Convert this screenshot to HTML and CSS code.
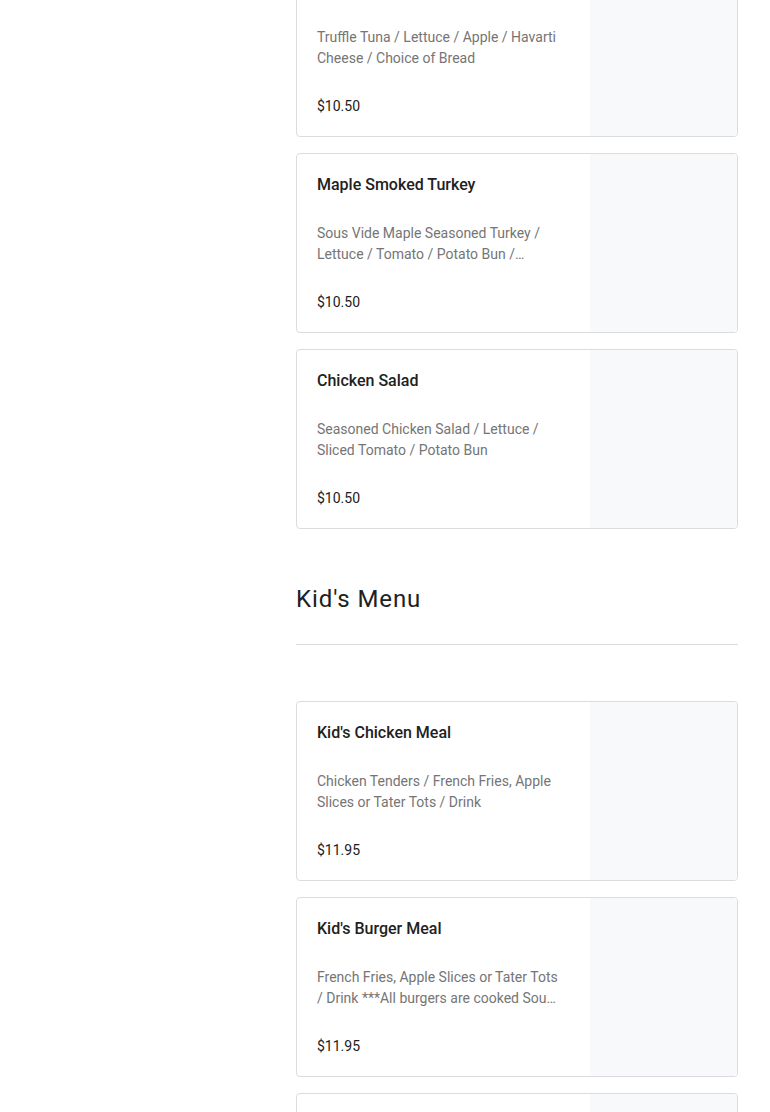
FILE: index.html
```html
<!DOCTYPE html>
<html lang="en">
<head>
<meta charset="utf-8">
<title>Menu</title>
<link rel="stylesheet" href="styles.css">
</head>
<body>
<div class="page">
  <aside class="sidebar"></aside>
  <main class="menu">
    <section class="section">
      <div class="items">
        <article class="card">
          <div class="card-body">
            <h3 class="item-title">Truffle Tuna</h3>
            <p class="item-desc">Truffle Tuna / Lettuce / Apple / Havarti Cheese / Choice of Bread</p>
            <div class="item-price">$10.50</div>
          </div>
          <div class="card-image"></div>
        </article>
        <article class="card">
          <div class="card-body">
            <h3 class="item-title">Maple Smoked Turkey</h3>
            <p class="item-desc">Sous Vide Maple Seasoned Turkey / Lettuce / Tomato / Potato Bun / Havarti Cheese</p>
            <div class="item-price">$10.50</div>
          </div>
          <div class="card-image"></div>
        </article>
        <article class="card">
          <div class="card-body">
            <h3 class="item-title">Chicken Salad</h3>
            <p class="item-desc">Seasoned Chicken Salad / Lettuce / Sliced Tomato / Potato Bun</p>
            <div class="item-price">$10.50</div>
          </div>
          <div class="card-image"></div>
        </article>
      </div>
    </section>
    <section class="section section-titled">
      <h2 class="section-title">Kid's Menu</h2>
      <hr class="divider">
      <div class="items">
        <article class="card">
          <div class="card-body">
            <h3 class="item-title">Kid's Chicken Meal</h3>
            <p class="item-desc">Chicken Tenders / French Fries, Apple Slices or Tater Tots / Drink</p>
            <div class="item-price">$11.95</div>
          </div>
          <div class="card-image"></div>
        </article>
        <article class="card">
          <div class="card-body">
            <h3 class="item-title">Kid's Burger Meal</h3>
            <p class="item-desc">French Fries, Apple Slices or Tater Tots / Drink ***All burgers are cooked Sous Vide to medium well***</p>
            <div class="item-price">$11.95</div>
          </div>
          <div class="card-image"></div>
        </article>
        <article class="card">
          <div class="card-body">
            <h3 class="item-title">Kid's Grilled Cheese Meal</h3>
            <p class="item-desc">Grilled Cheese / French Fries, Apple Slices or Tater Tots / Drink</p>
            <div class="item-price">$11.95</div>
          </div>
          <div class="card-image"></div>
        </article>
      </div>
    </section>
  </main>
</div>
</body>
</html>
```

FILE: styles.css
```css
* { box-sizing: border-box; }
html, body { margin: 0; padding: 0; background: #ffffff; }
body {
  font-family: Roboto, "Liberation Sans", Arial, sans-serif;
  color: #212121;
  overflow: hidden;
}
.page {
  display: grid;
  grid-template-columns: 296px 442px;
  padding-right: 32px;
  margin-top: -43px;
}
.sidebar { min-height: 10px; }
.menu { display: flex; flex-direction: column; }
.items { display: flex; flex-direction: column; gap: 16px; }
.card {
  display: flex;
  height: 180px;
  border: 1px solid #dadce0;
  border-radius: 4px;
  overflow: hidden;
  background: #fff;
}
.card-body {
  flex: 1;
  min-width: 0;
  padding: 19px 32px 19px 20px;
  display: flex;
  flex-direction: column;
}
.card-image {
  width: 147px;
  flex: none;
  background: #f8f9fb;
}
.item-title {
  margin: 0;
  font-size: 16px;
  line-height: 24px;
  font-weight: 500;
  color: #212121;
}
.item-desc {
  margin: 26px 0 0 0;
  font-size: 14px;
  line-height: 21px;
  color: #757575;
  display: -webkit-box;
  -webkit-line-clamp: 2;
  -webkit-box-orient: vertical;
  overflow: hidden;
}
.item-price {
  margin-top: 27px;
  font-size: 14px;
  line-height: 21px;
  color: #212121;
}
.section-titled { margin-top: 54px; }
.section-title {
  margin: 0;
  font-size: 24px;
  line-height: 32px;
  font-weight: 400;
  letter-spacing: 0.9px;
  color: #212121;
}
.divider {
  margin: 29px 0 56px 0;
  border: 0;
  border-top: 1px solid #dadce0;
  height: 0;
}
```
